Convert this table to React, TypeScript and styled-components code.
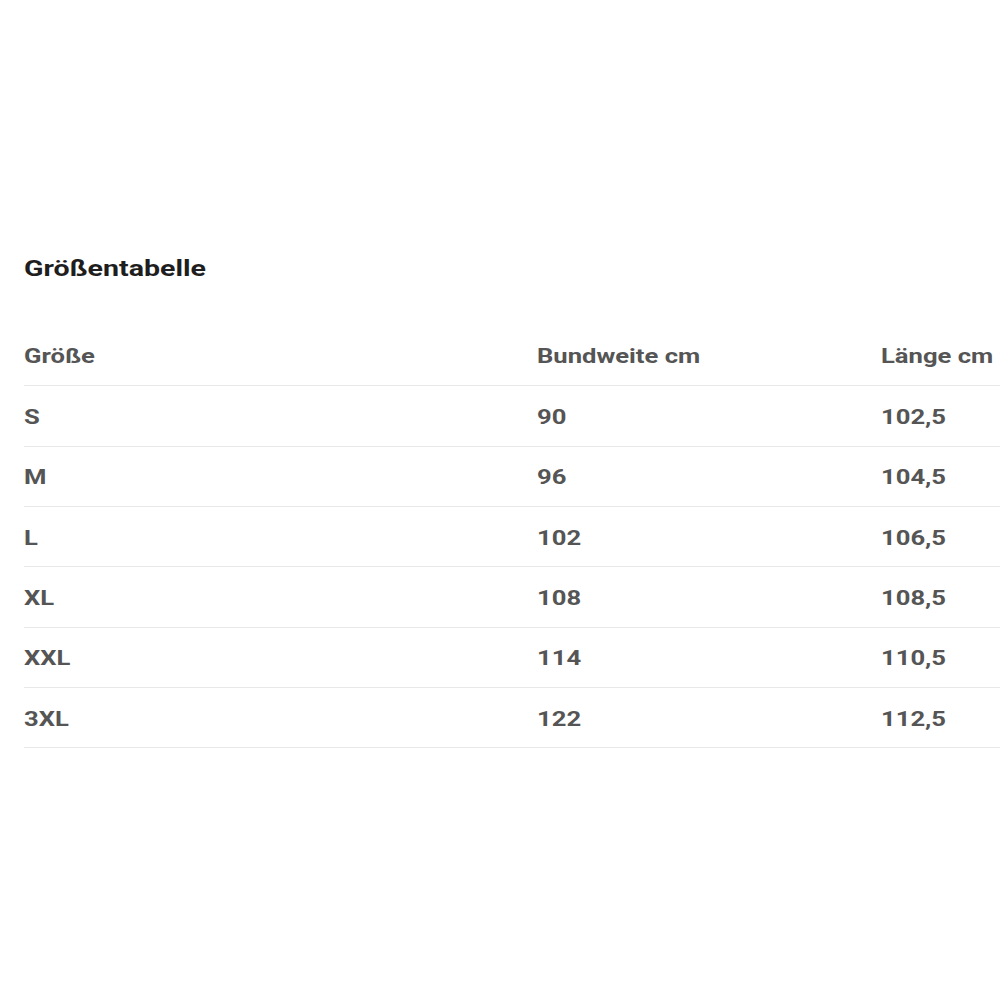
import React from "react";
import styled, { createGlobalStyle } from "styled-components";

const Global = createGlobalStyle`
  html, body { margin: 0; padding: 0; background: #fff; }
  body { font-family: Roboto, "Liberation Sans", Arial, sans-serif; }
`;

const Page = styled.div`
  width: 1000px;
  height: 1000px;
  overflow: hidden;
  box-sizing: border-box;
  padding: 255px 0 0 24px;
`;

const Stretch = styled.span`
  display: inline-block;
  transform: scaleX(1.28);
  transform-origin: left center;
  white-space: nowrap;
`;

const Title = styled.h2`
  margin: 0 0 45px 0;
  font-size: 22.3px;
  line-height: 26px;
  font-weight: 700;
  color: #1e1e1e;
`;

const Table = styled.div`
  width: 1100px;
  display: flex;
  flex-direction: column;
`;

const Row = styled.div<{ $head?: boolean }>`
  display: grid;
  grid-template-columns: 513px 344px 1fr;
  align-items: center;
  height: 60.33px;
  box-sizing: border-box;
  padding-top: ${(p) => (p.$head ? "0" : "2px")};
  border-bottom: 1px solid #e8e8e8;
`;

const Cell = styled.div`
  font-size: 20px;
  font-weight: 700;
  color: #555555;
  line-height: 24px;
`;

const rows = [
  ["S", "90", "102,5"],
  ["M", "96", "104,5"],
  ["L", "102", "106,5"],
  ["XL", "108", "108,5"],
  ["XXL", "114", "110,5"],
  ["3XL", "122", "112,5"],
];

export default function App() {
  return (
    <>
      <Global />
      <Page>
        <Title>
          <Stretch>Größentabelle</Stretch>
        </Title>
        <Table>
          <Row $head>
            <Cell><Stretch>Größe</Stretch></Cell>
            <Cell><Stretch>Bundweite cm</Stretch></Cell>
            <Cell><Stretch>Länge cm</Stretch></Cell>
          </Row>
          {rows.map((r) => (
            <Row key={r[0]}>
              {r.map((c, i) => (
                <Cell key={i}>
                  <Stretch>{c}</Stretch>
                </Cell>
              ))}
            </Row>
          ))}
        </Table>
      </Page>
    </>
  );
}
